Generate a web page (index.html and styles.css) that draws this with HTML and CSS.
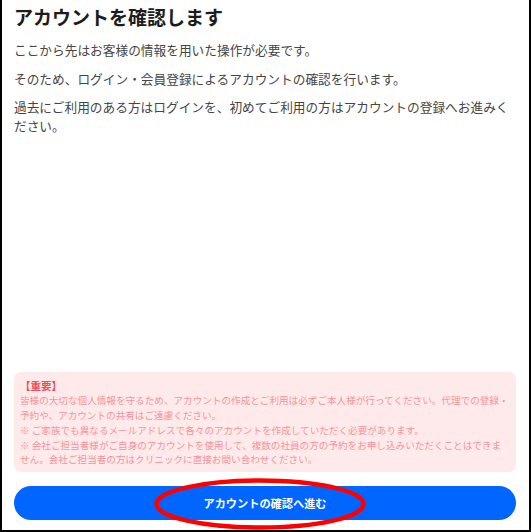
FILE: index.html
```html
<!DOCTYPE html>
<html lang="ja">
<head>
<meta charset="utf-8">
<title>アカウントを確認します</title>
<link rel="stylesheet" href="styles.css">
</head>
<body>
<div class="frame">
  <h1 class="title">アカウントを確認します</h1>
  <p class="text">ここから先はお客様の情報を用いた操作が必要です。</p>
  <p class="text">そのため、ログイン・会員登録によるアカウントの確認を行います。</p>
  <p class="text">過去にご利用のある方はログインを、初めてご利用の方はアカウントの登録へお進みください。</p>
  <div class="notice">
    <div class="notice-head">【重要】</div>
    <p class="notice-line">皆様の大切な個人情報を守るため、アカウントの作成とご利用は必ずご本人様が行ってください。代理での登録・予約や、アカウントの共有はご遠慮ください。</p>
    <p class="notice-line">※ ご家族でも異なるメールアドレスで各々のアカウントを作成していただく必要があります。</p>
    <p class="notice-line">※ 会社ご担当者様がご自身のアカウントを使用して、複数の社員の方の予約をお申し込みいただくことはできません。会社ご担当者の方はクリニックに直接お問い合わせください。</p>
  </div>
  <div class="action">
    <button class="btn" type="button">アカウントの確認へ進む</button>
    <svg class="mark" width="212" height="52" viewBox="0 0 212 52" aria-hidden="true">
      <ellipse cx="106" cy="26" rx="103.5" ry="23.5" fill="none" stroke="#ff0000" stroke-width="4.5"/>
    </svg>
  </div>
</div>
</body>
</html>
```
FILE: styles.css
```css
* { box-sizing: border-box; }
html, body { margin: 0; padding: 0; background: #ffffff; }
body {
  font-family: "Noto Sans CJK JP", "Noto Sans", sans-serif;
}
.frame {
  width: 531px;
  height: 532px;
  border-left: 2px solid #000;
  border-right: 2px solid #000;
  border-bottom: 2.5px solid #000;
  padding: 4px 13px 10px 12px;
  display: flex;
  flex-direction: column;
  background: #fff;
}
.title {
  margin: 0 0 11px 0;
  font-size: 19px;
  line-height: 26px;
  font-weight: 700;
  color: #1c1c1c;
}
.text {
  margin: 0 0 10px 0;
  font-size: 12.7px;
  line-height: 18.7px;
  color: #454545;
}
.notice {
  margin-top: auto;
  background: #ffeaeb;
  border-radius: 7px;
  padding: 7px 6px 5px 6px;
  color: #f5939a;
  font-size: 9.6px;
  line-height: 14.75px;
}
.notice-head {
  color: #f24b56;
  font-weight: 700;
  font-size: 10.5px;
}
.notice-line { margin: 0; }
.action {
  position: relative;
  margin-top: 14px;
}
.btn {
  display: block;
  width: 100%;
  height: 34px;
  border: none;
  border-radius: 17px;
  background: #0066ff;
  color: #fff;
  font-family: inherit;
  font-weight: 700;
  font-size: 11.2px;
  padding: 0;
}
.mark {
  position: absolute;
  left: 140px;
  top: -8px;
  pointer-events: none;
}
```
